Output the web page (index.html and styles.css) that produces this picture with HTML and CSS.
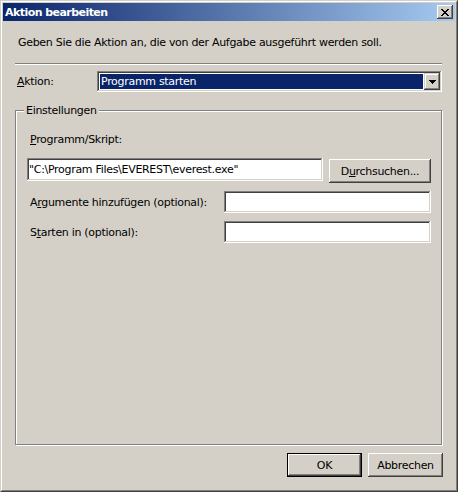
FILE: index.html
```html
<!DOCTYPE html>
<html lang="de">
<head>
<meta charset="utf-8">
<title>Aktion bearbeiten</title>
<link rel="stylesheet" href="styles.css">
</head>
<body>
<div class="window">
  <div class="frame">
    <div class="caption">
      <span class="caption-title">Aktion bearbeiten</span>
      <button class="close" aria-label="Schließen">
        <svg width="8" height="7" viewBox="0 0 8 7" shape-rendering="crispEdges"><path fill="#000" d="M0 0h2v1H0zM6 0h2v1H6zM1 1h2v1H1zM5 1h2v1H5zM2 2h4v1H2zM3 3h2v1H3zM2 4h4v1H2zM1 5h2v1H1zM5 5h2v1H5zM0 6h2v1H0zM6 6h2v1H6z"/></svg>
      </button>
    </div>
    <div class="client">
      <p class="intro">Geben Sie die Aktion an, die von der Aufgabe ausgeführt werden soll.</p>
      <div class="sep"></div>
      <div class="action-row">
        <span class="action-label"><u>A</u>ktion:</span>
        <div class="combo">
          <div class="combo-field"><span class="combo-sel">Programm starten</span></div>
          <div class="combo-btn">
            <svg width="7" height="4" viewBox="0 0 7 4" shape-rendering="crispEdges"><path fill="#000" d="M0 0h7v1H0zM1 1h5v1H1zM2 2h3v1H2zM3 3h1v1H3z"/></svg>
          </div>
        </div>
      </div>
      <div class="group">
        <span class="group-title">Einstellungen</span>
        <div class="field-label"><u>P</u>rogramm/Skript:</div>
        <div class="path-row">
          <div class="textbox path">"C:\Program Files\EVEREST\everest.exe"</div>
          <button class="btn browse">D<u>u</u>rchsuchen...</button>
        </div>
        <div class="opt-row first">
          <span class="opt-label">A<u>r</u>gumente hinzufügen (optional):</span>
          <div class="textbox opt"></div>
        </div>
        <div class="opt-row">
          <span class="opt-label">S<u>t</u>arten in (optional):</span>
          <div class="textbox opt"></div>
        </div>
      </div>
      <div class="buttons">
        <button class="btn dlg default">OK</button>
        <button class="btn dlg">Abbrechen</button>
      </div>
    </div>
  </div>
</div>
</body>
</html>
```
FILE: styles.css
```css
* { box-sizing: border-box; }
html, body { margin: 0; padding: 0; }
body {
  width: 458px;
  height: 492px;
  background: #d4d0c8;
  font-family: "DejaVu Sans", sans-serif;
  font-size: 11px;
  line-height: 13px;
  letter-spacing: -0.3px;
  color: #000;
  overflow: hidden;
}
u { text-decoration: underline; text-underline-offset: 1px; text-decoration-thickness: 1px; }

.window {
  width: 458px;
  height: 492px;
  border: 1px solid;
  border-color: #d4d0c8 #404040 #404040 #d4d0c8;
}
.frame {
  height: 100%;
  border: 1px solid;
  border-color: #fff #808080 #808080 #fff;
  padding: 1px;
  display: flex;
  flex-direction: column;
}

.caption {
  height: 18px;
  flex: none;
  background: linear-gradient(to right, #0a246a, #a6caf0);
  display: flex;
  align-items: center;
  justify-content: space-between;
  padding: 0 2px;
}
.caption-title {
  color: #fff;
  font-weight: bold;
  letter-spacing: -0.55px;
}
.close {
  width: 16px;
  height: 14px;
  padding: 0;
  border: 0;
  background: #d4d0c8;
  box-shadow: inset -1px -1px #404040, inset 1px 1px #fff, inset -2px -2px #808080, inset 2px 2px #d4d0c8;
  display: flex;
  align-items: center;
  justify-content: center;
}
.close svg { display: block; margin: 0 1px 0 0; }

.client {
  flex: 1;
  display: flex;
  flex-direction: column;
  padding: 0 12px 12px;
}
.intro {
  margin: 15px 0 0;
  padding-left: 3px;
}
.sep {
  margin: 14px 1px 0 0;
  height: 2px;
  border-top: 1px solid #808080;
  border-bottom: 1px solid #fff;
}

.action-row {
  margin-top: 6px;
  height: 21px;
  display: flex;
  align-items: center;
}
.action-label {
  width: 82px;
  padding-left: 2px;
}
.combo {
  width: 345px;
  height: 21px;
  display: flex;
  padding: 2px;
  background: #fff;
  box-shadow: inset -1px -1px #fff, inset 1px 1px #808080, inset -2px -2px #d4d0c8, inset 2px 2px #404040;
}
.combo-field {
  flex: 1;
  padding: 1px;
  display: flex;
}
.combo-sel {
  flex: 1;
  background: #0a246a;
  color: #fff;
  padding-left: 1px;
  line-height: 15px;
}
.combo-btn {
  width: 16px;
  height: 17px;
  background: #d4d0c8;
  box-shadow: inset -1px -1px #404040, inset 1px 1px #d4d0c8, inset -2px -2px #808080, inset 2px 2px #fff;
  display: flex;
  align-items: center;
  justify-content: center;
}
.combo-btn svg { display: block; }

.group {
  position: relative;
  margin: 18px 1px 0 0;
  flex: 1;
  border: 1px solid #808080;
  box-shadow: inset 1px 1px #fff, 1px 1px #fff;
  padding: 22px 10px 0 11px;
}
.group-title {
  position: absolute;
  top: -7px;
  left: 8px;
  padding: 0 2px;
  background: #d4d0c8;
}
.field-label { padding-left: 3px; }

.path-row {
  margin-top: 12px;
  display: flex;
  align-items: flex-start;
  gap: 6px;
}
.textbox {
  background: #fff;
  box-shadow: inset -1px -1px #fff, inset 1px 1px #808080, inset -2px -2px #d4d0c8, inset 2px 2px #404040;
  display: flex;
  align-items: center;
  padding-left: 2px;
}
.path {
  width: 296px;
  height: 23px;
  white-space: nowrap;
  overflow: hidden;
}

.btn {
  font: inherit;
  letter-spacing: inherit;
  color: #000;
  background: #d4d0c8;
  border: 0;
  padding: 0;
  box-shadow: inset -1px -1px #404040, inset 1px 1px #fff, inset -2px -2px #808080, inset 2px 2px #d4d0c8;
}
.browse {
  width: 102px;
  height: 24px;
  margin-top: 1px;
}

.opt-row {
  margin-top: 8px;
  height: 22px;
  display: flex;
  align-items: center;
  justify-content: space-between;
}
.opt-label { padding-left: 3px; }
.opt {
  width: 207px;
  height: 22px;
}

.buttons {
  margin-top: 8px;
  display: flex;
  justify-content: flex-end;
  gap: 6px;
}
.dlg {
  width: 75px;
  height: 24px;
}
.default {
  box-shadow: inset 0 0 0 1px #000, inset -2px -2px #404040, inset 2px 2px #fff, inset -3px -3px #808080, inset 3px 3px #d4d0c8;
}
```
